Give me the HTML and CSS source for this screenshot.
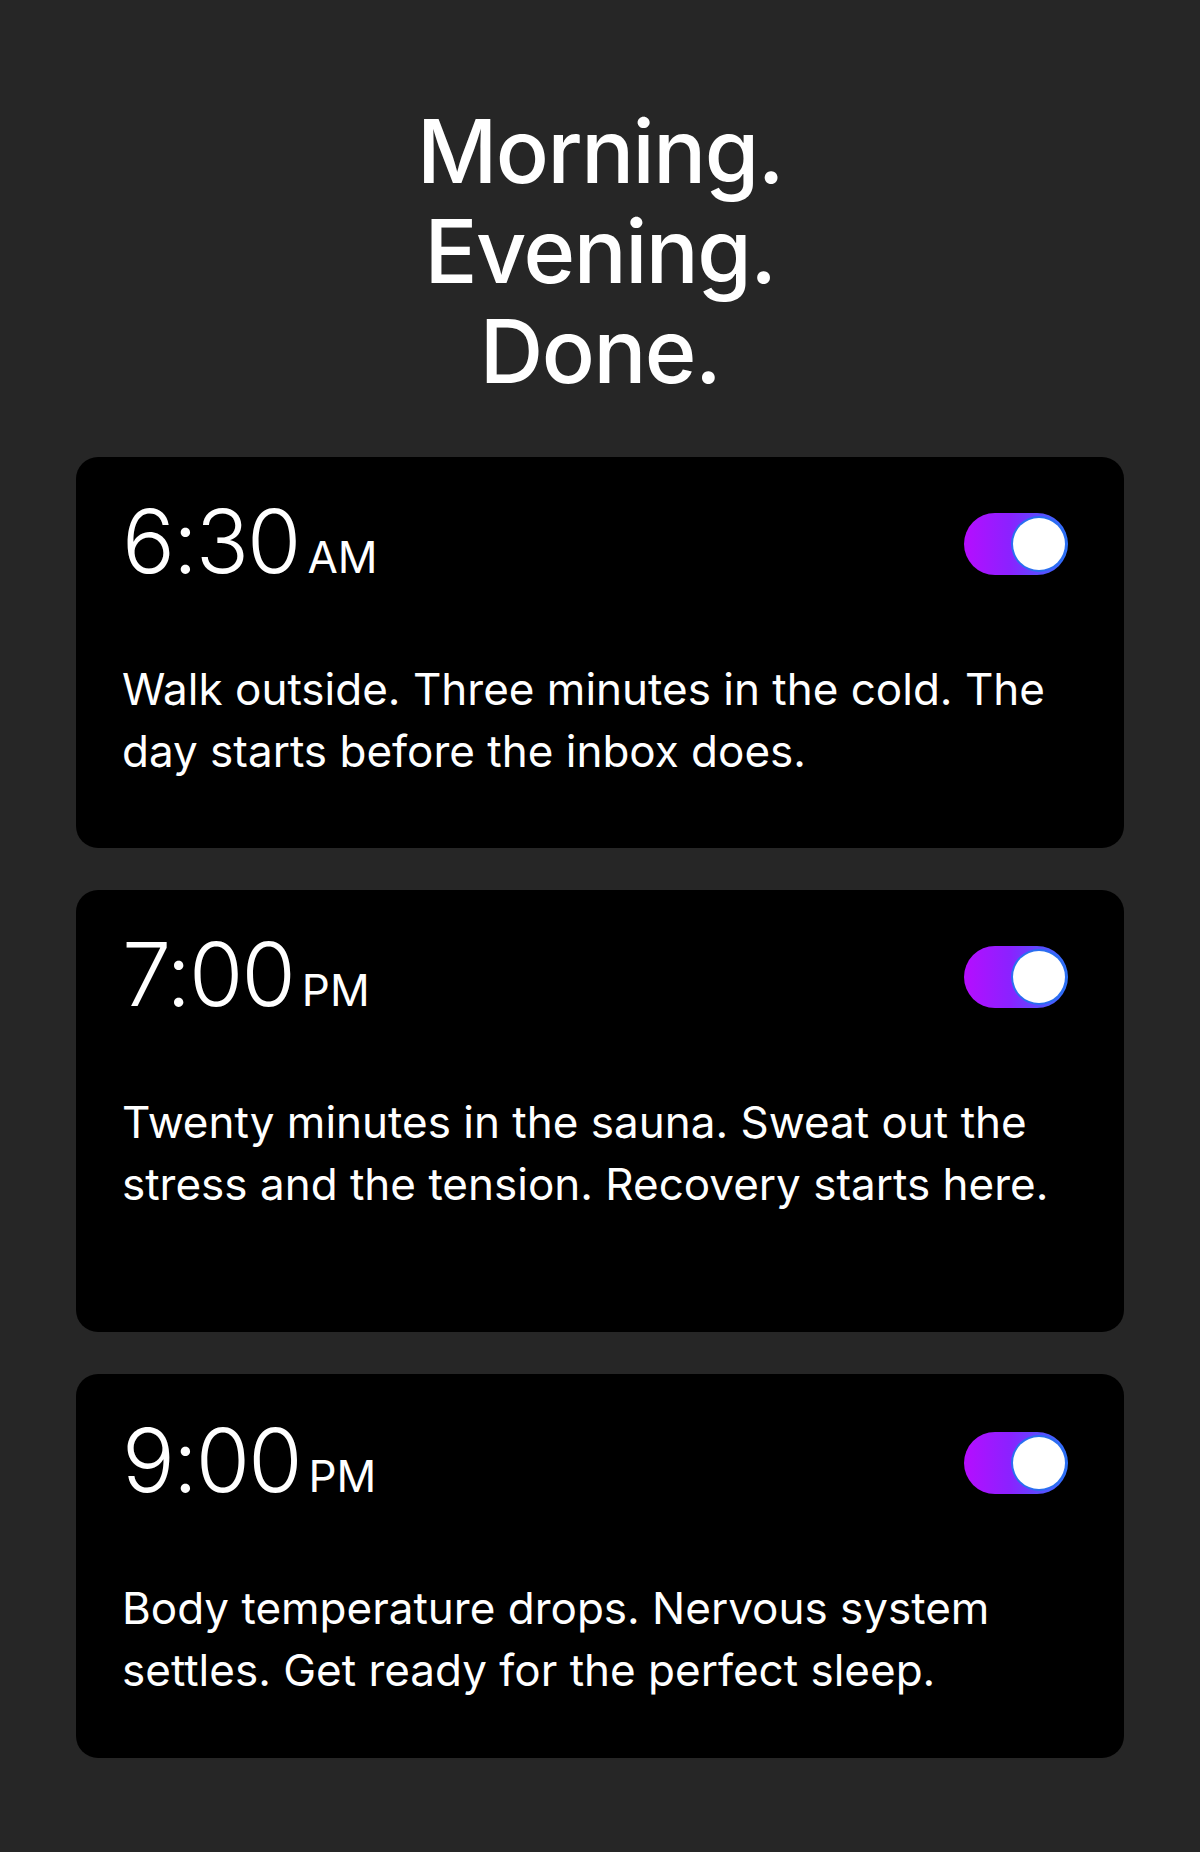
FILE: index.html
```html
<!DOCTYPE html>
<html lang="en">
<head>
<meta charset="utf-8">
<title>Morning. Evening. Done.</title>
<link rel="stylesheet" href="styles.css">
</head>
<body>
<main class="page">
  <h1 class="headline">Morning.<br>Evening.<br>Done.</h1>
  <section class="cards">
    <article class="card">
      <div class="card-top">
        <div class="time"><span class="clock">6:30</span><span class="ampm">AM</span></div>
        <div class="toggle"><span class="knob"></span></div>
      </div>
      <p class="desc">Walk outside. Three minutes in the cold. The day starts before the inbox does.</p>
    </article>
    <article class="card card-tall">
      <div class="card-top">
        <div class="time"><span class="clock">7:00</span><span class="ampm">PM</span></div>
        <div class="toggle"><span class="knob"></span></div>
      </div>
      <p class="desc">Twenty minutes in the sauna. Sweat out the stress and the tension. Recovery starts here.</p>
    </article>
    <article class="card card-short">
      <div class="card-top">
        <div class="time"><span class="clock">9:00</span><span class="ampm">PM</span></div>
        <div class="toggle"><span class="knob"></span></div>
      </div>
      <p class="desc">Body temperature drops. Nervous system settles. Get ready for the perfect sleep.</p>
    </article>
  </section>
</main>
</body>
</html>
```
FILE: styles.css
```css
* { box-sizing: border-box; }
html, body {
  margin: 0;
  padding: 0;
  background: #262626;
}
body {
  font-family: Inter, "Noto Sans", "Liberation Sans", sans-serif;
  color: #ffffff;
}
.page {
  width: 1048px;
  margin: 0 auto;
  padding: 101px 0 95px;
}
.headline {
  margin: 0 0 56px;
  text-align: center;
  font-size: 88px;
  line-height: 100px;
  font-weight: 500;
  letter-spacing: -1.5px;
}
.cards {
  display: flex;
  flex-direction: column;
  gap: 42px;
}
.card {
  background: #000000;
  border-radius: 22px;
  padding: 40px 46px 66px;
}
.card-tall {
  min-height: 442px;
}
.card-short {
  padding-top: 42px;
  padding-bottom: 57px;
}
.card-top {
  display: flex;
  align-items: center;
  justify-content: space-between;
}
.time {
  display: flex;
  align-items: baseline;
  line-height: 88px;
}
.clock {
  font-size: 88px;
  font-weight: 300;
  letter-spacing: -2px;
}
.ampm {
  font-size: 44px;
  font-weight: 400;
  margin-left: 8px;
}
.toggle {
  width: 104px;
  height: 62px;
  border-radius: 31px;
  background: linear-gradient(90deg, #b60dff 0%, #8a22ff 45%, #2f73ff 100%);
  display: flex;
  align-items: center;
  justify-content: flex-end;
  padding: 0 3px;
  margin-right: 10px;
  margin-bottom: 10px;
}
.knob {
  width: 52px;
  height: 52px;
  border-radius: 50%;
  background: #ffffff;
  box-shadow: 0 0 0 2px #2a6ff0;
}
.desc {
  margin: 57px 0 0;
  font-size: 44px;
  line-height: 62px;
  font-weight: 400;
  letter-spacing: 0;
}
```
